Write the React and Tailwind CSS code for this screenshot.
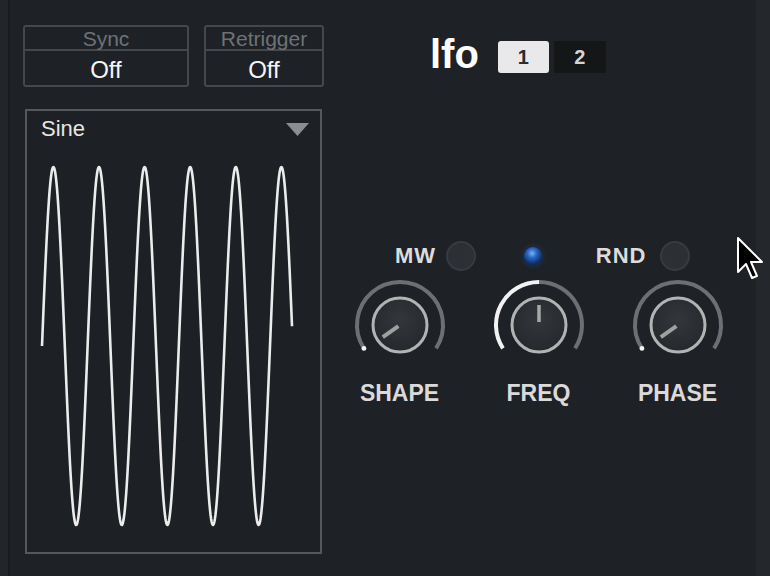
import React from "react";

const font = { fontFamily: '"Liberation Sans", Arial, sans-serif' };

// builds the sine path for the waveform display
function sinePath() {
  const x0 = 15;
  const x1 = 265;
  const period = 45.6;
  const cy = 199;
  const amp = 179;
  let d = "";
  for (let x = x0; x <= x1; x += 0.5) {
    const y = cy - amp * Math.sin(((x - x0) / period) * Math.PI * 2);
    d += (x === x0 ? "M" : "L") + x.toFixed(1) + " " + y.toFixed(1) + " ";
  }
  return d;
}

function polar(r, deg) {
  const a = (deg * Math.PI) / 180;
  return [50 + r * Math.cos(a), 50 + r * Math.sin(a)];
}

function Knob({ mode }) {
  const r = 43;
  const [sx, sy] = polar(r, 180 - 33);
  const [ex, ey] = polar(r, 33);
  const full = `M${sx} ${sy} A${r} ${r} 0 1 1 ${ex} ${ey}`;
  const left = `M${sx} ${sy} A${r} ${r} 0 0 1 50 ${50 - r}`;
  const right = `M50 ${50 - r} A${r} ${r} 0 0 1 ${ex} ${ey}`;
  const [ax, ay] = polar(2, 180 - 35);
  const [bx, by] = polar(21, 180 - 35);
  return (
    <svg width="100" height="100" viewBox="0 0 100 100">
      <defs>
        <radialGradient id={"kf" + mode} cx="50%" cy="40%" r="60%">
          <stop offset="0%" stopColor="#33363a" />
          <stop offset="100%" stopColor="#25282c" />
        </radialGradient>
      </defs>
      {mode === "mid" ? (
        <>
          <path d={right} fill="none" stroke="#6c6f73" strokeWidth="4" />
          <path d={left} fill="none" stroke="#f2f2f2" strokeWidth="4" />
        </>
      ) : (
        <>
          <path d={full} fill="none" stroke="#6c6f73" strokeWidth="4" />
          <circle cx={sx} cy={sy} r="2.4" fill="#f4f4f4" />
        </>
      )}
      <circle cx="50" cy="50" r="27" fill={`url(#kf${mode})`} stroke="#b3b3b3" strokeWidth="3" />
      {mode === "mid" ? (
        <line x1="50" y1="30" x2="50" y2="47" stroke="#a8a8a8" strokeWidth="3.5" />
      ) : (
        <line x1={ax} y1={ay} x2={bx} y2={by} stroke="#a0a0a0" strokeWidth="4" />
      )}
    </svg>
  );
}

function Toggle({ label, width }) {
  return (
    <div className={`${width} h-[62px] rounded-[3px] border-2 border-[#44484c] flex flex-col`}>
      <div className="h-[24px] flex items-center justify-center text-[21px] leading-none text-[#6e7276] border-b-2 border-[#44484c]">
        {label}
      </div>
      <div className="flex-1 flex items-center justify-center pt-[3px] text-[24px] leading-none text-[#f6f6f6]">
        Off
      </div>
    </div>
  );
}

export default function App() {
  return (
    <div className="w-[770px] h-[576px] bg-[#1e2226] flex overflow-hidden relative" style={font}>
      <div className="w-[8px] bg-[#22262a]" />
      <div className="w-[2px] bg-[#191c1f]" />

      {/* left column */}
      <div className="w-[314px] pl-[13px] pt-[25px] flex flex-col">
        <div className="flex gap-[15px]">
          <Toggle label="Sync" width="w-[166px]" />
          <Toggle label="Retrigger" width="w-[120px]" />
        </div>
        <div className="mt-[22px] ml-[2px] w-[297px] h-[445px] border-2 border-[#54585c] bg-[#1d2024] flex flex-col">
          <div className="h-[36px] flex items-center justify-between pl-[14px] pr-[11px]">
            <span className="text-[22px] leading-none text-[#e6e6e6]">Sine</span>
            <svg width="23" height="13" viewBox="0 0 23 13">
              <path d="M0 0 H23 L11.5 13 Z" fill="#8b8e91" />
            </svg>
          </div>
          <svg width="293" height="405" viewBox="0 0 293 405">
            <path d={sinePath()} fill="none" stroke="#ececec" strokeWidth="2.6" strokeLinejoin="round" />
          </svg>
        </div>
      </div>

      {/* right area */}
      <div className="w-[432px] flex flex-col">
        <div className="mt-[37px] h-[40px] flex items-center pl-[106px]">
          <span className="text-[40px] leading-none font-bold text-white -mt-[7px]">lfo</span>
          <div className="ml-[19px] flex gap-[5px]">
            <div className="w-[51px] h-[32px] rounded-[3px] bg-[#e9e9eb] flex items-center justify-center text-[20px] font-bold text-[#2a2c2f]">
              1
            </div>
            <div className="w-[52px] h-[32px] rounded-[2px] bg-[#141618] flex items-center justify-center text-[20px] font-bold text-[#d4d4d4]">
              2
            </div>
          </div>
        </div>

        <div className="mt-[164px] h-[30px] flex items-center">
          <span className="ml-[71px] text-[22px] leading-none font-bold text-[#dcdcdc] tracking-[0.04em]">MW</span>
          <div className="ml-[10px] w-[30px] h-[30px] rounded-full bg-[#2c3034] border-2 border-[#383c40]" />
          <div className="ml-[48px] w-[18px] h-[18px] rounded-full bg-[radial-gradient(circle_at_45%_35%,#7fb2f5_0%,#2a66c4_30%,#0f3370_65%,#0a1730_100%)] shadow-[0_0_4px_2px_rgba(30,70,140,0.35)]" />
          <span className="ml-[54px] text-[22px] leading-none font-bold text-[#dcdcdc] tracking-[0.04em]">RND</span>
          <div className="ml-[14px] w-[30px] h-[30px] rounded-full bg-[#2c3034] border-2 border-[#383c40]" />
        </div>

        <div className="mt-[4px] ml-[6px] w-[417px] grid grid-cols-3">
          <div className="flex justify-center"><Knob mode="min" /></div>
          <div className="flex justify-center"><Knob mode="mid" /></div>
          <div className="flex justify-center"><Knob mode="min" /></div>
        </div>

        <div className="mt-[5px] ml-[6px] w-[417px] grid grid-cols-3 text-[23px] leading-[26px] font-bold text-[#dadada] text-center">
          <span>SHAPE</span>
          <span>FREQ</span>
          <span>PHASE</span>
        </div>
      </div>

      <div className="flex-1 bg-[#24282c]" />

      {/* mouse cursor */}
      <svg className="absolute left-[736px] top-[236px]" width="28" height="46" viewBox="0 0 28 46">
        <path
          d="M2 2 L2 36 L10 28 L16 42 L21 40 L15 26 L26 26 Z"
          fill="#000"
          stroke="#fff"
          strokeWidth="2"
          strokeLinejoin="round"
        />
      </svg>
    </div>
  );
}
